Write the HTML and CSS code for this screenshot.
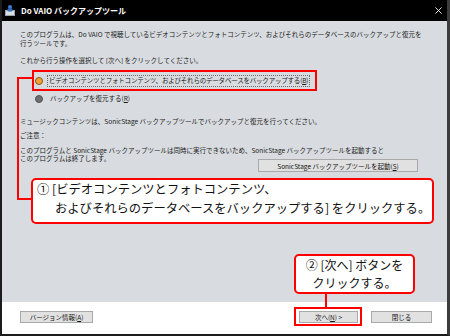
FILE: index.html
```html
<!DOCTYPE html>
<html lang="ja">
<head>
    <meta charset="UTF-8">
    <meta name="viewport" content="width=device-width, initial-scale=1.0">
    <title>Do VAIO バックアップツール</title>
    <link rel="stylesheet" href="styles.css">
</head>

<body>
    <div class="window">
        <div class="titlebar">
            <svg class="app-icon" viewBox="0 0 12 13">
                <rect x="1" y="6" width="10" height="6" fill="#9aa4ad" />
                <rect x="2" y="7" width="8" height="4" fill="#d9dfe4" />
                <circle cx="6" cy="3" r="2" fill="#3d7fd4" />
                <rect x="3.5" y="4.5" width="5" height="3" rx="1" fill="#2f6cc0" />
            </svg>
            <span class="title-text">Do VAIO バックアップツール</span>
            <svg class="close" viewBox="0 0 8 8">
                <path d="M0.5,0.5 L7.5,7.5 M7.5,0.5 L0.5,7.5" stroke="#fff" stroke-width="1" />
            </svg>
        </div>

        <div class="content">
            <p class="intro">このプログラムは、Do VAIO で視聴しているビデオコンテンツとフォトコンテンツ、およびそれらのデータベースのバックアップと復元を<br>行うツールです。</p>
            <p class="prompt">これから行う操作を選択して [次へ] をクリックしてください。</p>

            <div class="options">
                <div class="option">
                    <span class="radio checked"></span>
                    <span class="focus">ビデオコンテンツとフォトコンテンツ、およびそれらのデータベースをバックアップする(<u>B</u>)</span>
                </div>
                <div class="option">
                    <span class="radio"></span>
                    <span class="label">バックアップを復元する(<u>R</u>)</span>
                </div>
            </div>

            <p class="music">ミュージックコンテンツは、SonicStage バックアップツールでバックアップと復元を行ってください。</p>
            <p class="note-title">ご注意：</p>
            <p class="note">このプログラムと SonicStage バックアップツールは同時に実行できないため、SonicStage バックアップツールを起動すると</p>
            <div class="note-row">
                <span>このプログラムは終了します。</span>
                <button class="btn btn-sonic">SonicStage バックアップツールを起動(<u>S</u>)</button>
            </div>
        </div>

        <div class="footer">
            <button class="btn btn-version">バージョン情報(<u>A</u>)</button>
            <div class="footer-right">
                <button class="btn btn-next">次へ(<u>N</u>) &gt;</button>
                <button class="btn btn-close">閉じる</button>
            </div>
        </div>
    </div>

    <!-- annotations drawn over the dialog -->
    <div class="mark mark-option"></div>
    <div class="leader leader-option"></div>
    <div class="callout callout-option">
        <div>① [ビデオコンテンツとフォトコンテンツ、</div>
        <div class="indent">およびそれらのデータベースをバックアップする] をクリックする。</div>
    </div>

    <div class="callout callout-next">
        <div>② [次へ] ボタンを</div>
        <div>クリックする。</div>
    </div>
    <div class="leader leader-next"></div>
    <div class="mark mark-next"></div>
</body>
</html>
```

FILE: styles.css
```css
* {
    margin: 0;
    padding: 0;
    box-sizing: border-box;
}

body {
    width: 450px;
    height: 336px;
    position: relative;
    overflow: hidden;
    background: #fff;
    font-family: "Noto Sans CJK JP", sans-serif;
}

.window {
    width: 450px;
    height: 336px;
    display: flex;
    flex-direction: column;
    background: #d8dce0;
    border-left: 2px solid #1c1c1c;
    border-right: 3px solid #3c3c3c;
    border-bottom: 2px solid #1c1c1c;
}

/* title bar */
.titlebar {
    height: 21px;
    background: #000;
    color: #fff;
    display: flex;
    align-items: center;
    padding: 0 5px 0 2px;
}

.app-icon {
    width: 12px;
    height: 13px;
    margin-right: 5px;
}

.title-text {
    flex: 1;
    font-size: 8px;
    font-weight: 700;
    white-space: nowrap;
}

.close {
    width: 7px;
    height: 7px;
}

/* dialog body */
.content {
    flex: 1;
    padding: 9px 29px 0 18px;
    font-size: 6.5px;
    line-height: 8.5px;
    color: #1a1a1a;
    white-space: nowrap;
}

.prompt {
    margin-top: 9px;
}

.options {
    margin-top: 9px;
    padding-left: 15px;
    display: flex;
    flex-direction: column;
    gap: 4px;
}

.option {
    height: 14px;
    display: flex;
    align-items: center;
    gap: 4px;
}

.radio {
    width: 8px;
    height: 8px;
    border-radius: 50%;
    background: #6e6f70;
    border: 1px solid #505152;
}

.radio.checked {
    background: #f0a336;
    border-color: #8a5a14;
}

.focus {
    height: 12px;
    display: flex;
    align-items: center;
    padding: 0 1px;
    letter-spacing: -0.2px;
    border: 1px dotted #6a6a6a;
}

.label {
    padding: 0 3px;
}

.music {
    margin-top: 11px;
}

.note-title {
    margin-top: 6px;
}

.note {
    margin-top: 6px;
}

.note-row {
    display: flex;
    justify-content: space-between;
    align-items: flex-start;
}

/* buttons */
.btn {
    height: 12px;
    border: 1px solid #a9a9a9;
    background: #e1e1e1;
    color: #111;
    font-family: inherit;
    font-size: 6.5px;
    line-height: 10px;
    display: flex;
    align-items: center;
    justify-content: center;
}

.btn-sonic {
    width: 160px;
    height: 13px;
    margin-top: 5px;
}

.footer {
    height: 32px;
    background: #fff;
    display: flex;
    justify-content: space-between;
    align-items: flex-start;
    padding: 9px 15px 0 18px;
}

.footer-right {
    display: flex;
    gap: 13px;
}

.btn-version {
    width: 73px;
}

.btn-next {
    width: 59px;
}

.btn-close {
    width: 61px;
}

/* red annotations */
.mark,
.leader,
.callout {
    position: absolute;
}

.mark {
    border: 2px solid #f00;
}

.mark-option {
    left: 32px;
    top: 70px;
    width: 285px;
    height: 21px;
}

.mark-next {
    left: 294px;
    top: 307px;
    width: 68px;
    height: 19px;
}

.leader-option {
    left: 17px;
    top: 77px;
    width: 15px;
    height: 123px;
    border: 2px solid #f00;
    border-right: none;
}

.leader-next {
    left: 325px;
    top: 292px;
    width: 2px;
    height: 16px;
    background: #f00;
}

.callout {
    background: #fff;
    border: 2px solid #f00;
    border-radius: 5px;
    color: #111;
    font-size: 12.3px;
    white-space: nowrap;
}

.callout-option {
    left: 31px;
    top: 178px;
    width: 403px;
    height: 46px;
    padding-left: 4px;
    line-height: 19px;
}

.callout-option .indent {
    padding-left: 18px;
}

.callout-next {
    left: 294px;
    top: 254px;
    width: 121px;
    height: 40px;
    font-size: 12px;
    text-align: center;
    line-height: 18px;
}
```
